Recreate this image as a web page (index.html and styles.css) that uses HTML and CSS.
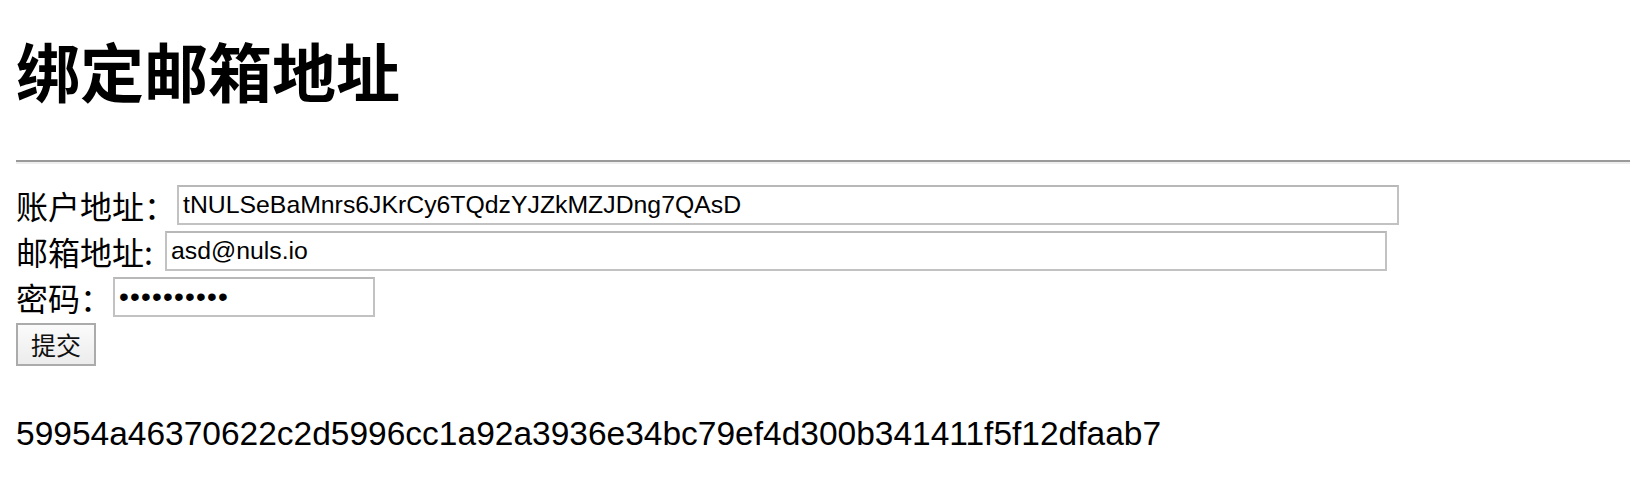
FILE: index.html
```html
<!DOCTYPE html>
<html lang="zh-CN">
<head>
<meta charset="utf-8">
<title>绑定邮箱地址</title>
<link rel="stylesheet" href="styles.css">
</head>
<body>
<h1 class="title">绑定邮箱地址</h1>
<hr class="rule">
<form class="bind-form">
  <div class="row">
    <label class="label">账户地址：</label>
    <input class="field field-wide" type="text" value="tNULSeBaMnrs6JKrCy6TQdzYJZkMZJDng7QAsD">
  </div>
  <div class="row">
    <label class="label label-email">邮箱地址:</label>
    <input class="field field-wide" type="text" value="asd@nuls.io">
  </div>
  <div class="row">
    <label class="label">密码：</label>
    <input class="field field-short" type="password" value="1234567890">
  </div>
  <div class="row">
    <button class="submit" type="button">提交</button>
  </div>
</form>
<div class="hash">59954a46370622c2d5996cc1a92a3936e34bc79ef4d300b341411f5f12dfaab7</div>
</body>
</html>
```

FILE: styles.css
```css
html, body {
  margin: 0;
  padding: 0;
  background: #ffffff;
  color: #000000;
}
body {
  padding-left: 16px;
  overflow: hidden;
  font-family: "Noto Sans CJK SC", "Liberation Sans", sans-serif;
}
.title {
  margin: 37px 0 0 0;
  font-size: 64px;
  line-height: 64px;
  font-weight: 700;
  font-family: "Noto Sans CJK SC", sans-serif;
}
.rule {
  margin: 59px 0 0 0;
  height: 0;
  border: 0;
  border-top: 2px solid #9a9a9a;
  border-bottom: 2px solid #eeeeee;
}
.bind-form {
  margin-top: 21px;
  display: flex;
  flex-direction: column;
  gap: 6px;
}
.row {
  display: flex;
  align-items: center;
  height: 40px;
}
.row:last-child {
  height: 43px;
}
.label {
  flex-shrink: 0;
  font-size: 32px;
  line-height: 40px;
  font-family: "Noto Sans CJK SC", sans-serif;
  white-space: nowrap;
}
.label-email {
  width: 148px;
}
.field {
  box-sizing: border-box;
  height: 40px;
  margin: 0 0 0 1px;
  padding: 0 4px;
  border: 2px solid #c2c2c2;
  border-top-color: #b8b8b8;
  background: #ffffff;
  font-family: "Liberation Sans", Arial, sans-serif;
  font-size: 24.8px;
  color: #000000;
  outline: none;
}
.field-wide {
  width: 1222px;
}
.field-short {
  width: 262px;
  font-size: 28px;
  letter-spacing: 1.2px;
}
.submit {
  box-sizing: border-box;
  width: 80px;
  height: 43px;
  margin: 0;
  padding: 0;
  border: 2px solid #ababab;
  background: linear-gradient(#fbfbfb, #ececec);
  font-family: "Noto Sans CJK SC", sans-serif;
  font-size: 25px;
  line-height: 37px;
  color: #111111;
}
.hash {
  margin-top: 50px;
  font-family: "Liberation Sans", Arial, sans-serif;
  font-size: 33.5px;
  line-height: 36px;
  white-space: nowrap;
}
```
